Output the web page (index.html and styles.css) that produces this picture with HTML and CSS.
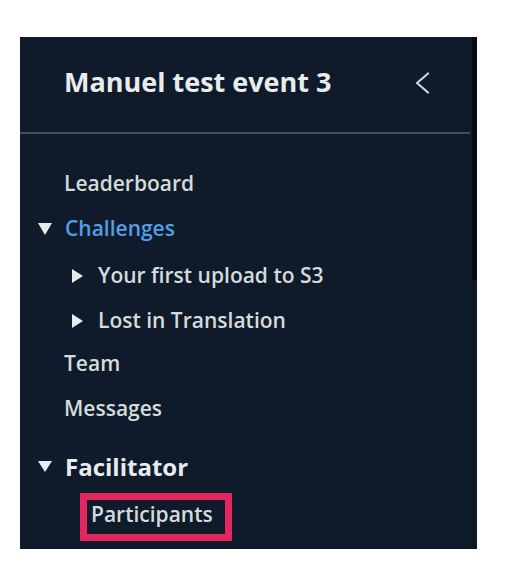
FILE: index.html
```html
<!DOCTYPE html>
<html lang="en">
<head>
<meta charset="utf-8">
<title>Manuel test event 3</title>
<link rel="stylesheet" href="styles.css">
</head>
<body>
<aside class="panel">
  <div class="panel-main">
    <header class="panel-header">
      <h1 class="title">Manuel test event 3</h1>
      <button class="collapse" aria-label="Close navigation">
        <svg width="16" height="22" viewBox="0 0 16 22"><path d="M14 1.5 L3 11 L14 20.5" fill="none" stroke="#d1d5db" stroke-width="2.2" stroke-linecap="round" stroke-linejoin="round"/></svg>
      </button>
    </header>
    <div class="divider"></div>
    <nav class="nav">
      <a class="item">Leaderboard</a>
      <div class="item group">
        <span class="tri tri-down"></span>
        <a class="link-active">Challenges</a>
      </div>
      <div class="item sub">
        <span class="tri tri-right"></span>
        <a>Your first upload to S3</a>
      </div>
      <div class="item sub">
        <span class="tri tri-right"></span>
        <a>Lost in Translation</a>
      </div>
      <a class="item">Team</a>
      <a class="item">Messages</a>
      <div class="item group section">
        <span class="tri tri-down small"></span>
        <span class="section-title">Facilitator</span>
      </div>
      <a class="highlight">Participants</a>
    </nav>
  </div>
  <div class="scroll-strip"></div>
</aside>
</body>
</html>
```
FILE: styles.css
```css
* { box-sizing: border-box; }
html, body { margin: 0; padding: 0; background: #ffffff; }
body { font-family: "Open Sans", "Noto Sans", sans-serif; }

.panel {
  margin: 37px 0 0 20px;
  width: 457px;
  height: 512px;
  background: #0f1b2a;
  display: flex;
}
.panel-main { flex: 1; display: flex; flex-direction: column; }
.scroll-strip {
  width: 5px;
  background: linear-gradient(#050a12 0, #050a12 243px, #0d1826 243px);
}

.panel-header {
  display: flex;
  align-items: center;
  justify-content: space-between;
  padding: 27px 42px 32px 44px;
}
.title {
  margin: 0;
  font-size: 27px;
  line-height: 36px;
  font-weight: 700;
  color: #e9ebed;
}
.collapse {
  background: none; border: 0; padding: 0; margin: 1px 0 0 0;
  display: flex;
}
.divider {
  height: 2px;
  background: #414d5c;
  margin-right: 2px;
}

.nav { padding-top: 27px; display: flex; flex-direction: column; }
.item {
  display: flex;
  align-items: center;
  font-size: 21px;
  line-height: 45px;
  font-weight: 600;
  color: #d5dbdb;
  padding-left: 44px;
}
.group { padding-left: 18px; gap: 13px; }
.sub { padding-left: 52px; gap: 15px; padding-top: 2px; margin-bottom: -2px; }
.link-active { color: #539fe5; }

.tri { display: block; width: 0; height: 0; }
.tri-down {
  border-left: 7.5px solid transparent;
  border-right: 7.5px solid transparent;
  border-top: 12px solid #e9ebed;
}
.tri-down.small { border-top-width: 11px; }
.tri-right {
  border-top: 7px solid transparent;
  border-bottom: 7px solid transparent;
  border-left: 11px solid #e9ebed;
}

.section { margin-top: 13px; }
.section-title {
  font-size: 24px;
  font-weight: 700;
  color: #e9ebed;
}

.highlight {
  align-self: flex-start;
  margin: 4px 0 0 60px;
  border: 7px solid #e3265d;
  padding: 3px 12px 8px 4px;
  font-size: 21px;
  line-height: 23px;
  font-weight: 600;
  color: #d5dbdb;
}
```
